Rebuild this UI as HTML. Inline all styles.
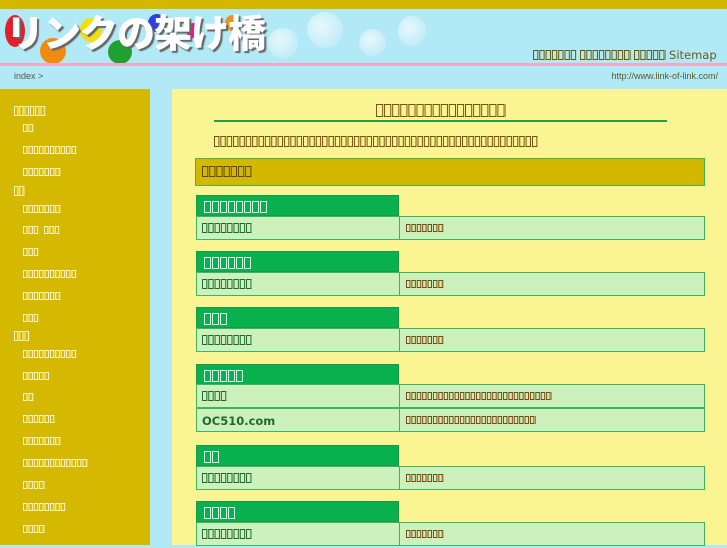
<!DOCTYPE html>
<html><head><meta charset="utf-8"><style>
*{margin:0;padding:0;box-sizing:border-box}
body{width:727px;height:545px;overflow:hidden;position:relative;background:#b2e9f6;font-family:"Liberation Sans",sans-serif}
.a{position:absolute;white-space:nowrap;line-height:1}
.t{display:inline-block;vertical-align:top;color:transparent;overflow:hidden;font-size:6px;line-height:1;white-space:nowrap;height:var(--h);
background:
linear-gradient(to right,var(--c) 1px,transparent 1px,transparent calc(var(--w) - 2px),var(--c) calc(var(--w) - 2px),var(--c) calc(var(--w) - 1px),transparent calc(var(--w) - 1px)) 0 0/var(--w) 100% repeat-x,
linear-gradient(to right,var(--c) calc(var(--w) - 1px),transparent calc(var(--w) - 1px)) 0 0/var(--w) 1px repeat-x,
linear-gradient(to right,var(--c) calc(var(--w) - 1px),transparent calc(var(--w) - 1px)) 0 100%/var(--w) 1px repeat-x}
.sh{--c:#fff6c8;--w:5.3px;--h:10px}
.ss{--c:#fff6c8;--w:5.4px;--h:8px}
.gh{position:absolute;left:196px;width:203px;height:21px;background:#08b04e;border:1px solid #1a9a48;padding:5px 0 0 7px}
.gh .t{--c:#d8ffe8;--w:8px;--h:12px}
.row{position:absolute;left:196px;width:509px;height:24px;background:#cdf1bc;border:1px solid #3db55a}
.row .l{position:absolute;left:5px;top:6px}
.row .l .t{--c:#1f6a2c;--w:6.3px;--h:10px}
.row .r{position:absolute;left:202px;top:0;height:22px;border-left:1px solid #3db55a;padding:7px 0 0 6px;width:306px}
.row .r .t{--c:#7a4a10;--w:5.4px;--h:8px}
.bub{position:absolute;border-radius:50%;background:radial-gradient(circle at 40% 40%,#e8f8fd,#c8eef8 60%,#bfe9f6)}
.ball{position:absolute;border-radius:50%}
</style></head><body>
<div style="position:absolute;left:0;top:0;width:727px;height:9px;background:#d4b800"></div>
<div class="bub" style="left:268px;top:28px;width:30px;height:30px"></div>
<div class="bub" style="left:307px;top:12px;width:36px;height:36px"></div>
<div class="bub" style="left:359px;top:29px;width:27px;height:27px"></div>
<div class="bub" style="left:398px;top:16px;width:28px;height:30px"></div>
<div class="ball" style="left:5px;top:15px;width:20px;height:32px;background:#e0202a"></div>
<div class="ball" style="left:40px;top:38px;width:26px;height:26px;background:#f08a10"></div>
<div class="ball" style="left:80px;top:18px;width:22px;height:24px;background:#f0e010"></div>
<div class="ball" style="left:108px;top:40px;width:24px;height:24px;background:#20a030"></div>
<div class="ball" style="left:148px;top:14px;width:18px;height:18px;background:#3040e0"></div>
<div class="ball" style="left:186px;top:23px;width:15px;height:15px;background:#e02080"></div>
<div class="ball" style="left:225px;top:15px;width:15px;height:16px;background:#f09020"></div>
<div class="a" style="left:6px;top:12px;font-family:'Noto Sans CJK JP',sans-serif;font-weight:900;font-size:38px;color:#fff;letter-spacing:-1px;text-shadow:2px 2px 1px #666">リンクの架け橋</div>
<div class="a" style="left:533px;top:49px;color:#6b5800;font-size:12px"><span class="t" style="--c:#6b5800;--w:6.3px;--h:10px;margin-top:1px">あいうえおかき</span> <span class="t" style="--c:#6b5800;--w:6.3px;--h:10px;margin-top:1px">あいうえおかきく</span> <span class="t" style="--c:#6b5800;--w:6.3px;--h:10px;margin-top:1px">あいうえお</span> <span style="font-family:'DejaVu Sans',sans-serif;font-size:11.5px;color:#6b5a20">Sitemap</span></div>
<div style="position:absolute;left:0;top:63px;width:727px;height:3px;background:#f4a6c4"></div>
<div class="a" style="left:14px;top:72px;font-size:9px;color:#5a5a40">index &gt;</div>
<div class="a" style="right:9px;top:72px;font-size:9px;color:#5a5a20">http://www.link-of-link.com/</div>
<div style="position:absolute;left:0;top:89px;width:150px;height:456px;background:#d4b900">
<div class="a" style="left:14px;top:17px"><span class="t sh">ナビゲーショ</span></div>
<div class="a" style="left:23px;top:35px"><span class="t ss">ホム</span></div>
<div class="a" style="left:23px;top:57px"><span class="t ss">あいうえおかきくけこ</span></div>
<div class="a" style="left:23px;top:79px"><span class="t ss">あいうえおかき</span></div>
<div class="a" style="left:14px;top:97px"><span class="t sh">分類</span></div>
<div class="a" style="left:23px;top:116px"><span class="t ss">あいうえおかき</span></div>
<div class="a" style="left:23px;top:137px"><span class="t ss">あいう</span> <span class="t ss">えおか</span></div>
<div class="a" style="left:23px;top:159px"><span class="t ss">あいう</span></div>
<div class="a" style="left:23px;top:181px"><span class="t ss">あいうえおかきくけこ</span></div>
<div class="a" style="left:23px;top:203px"><span class="t ss">あいうえおかき</span></div>
<div class="a" style="left:23px;top:225px"><span class="t ss">あいう</span></div>
<div class="a" style="left:14px;top:242px"><span class="t sh">その他</span></div>
<div class="a" style="left:23px;top:261px"><span class="t ss">あいうえおかきくけこ</span></div>
<div class="a" style="left:23px;top:283px"><span class="t ss">あいうえお</span></div>
<div class="a" style="left:23px;top:304px"><span class="t ss">あい</span></div>
<div class="a" style="left:23px;top:326px"><span class="t ss">あいうえおか</span></div>
<div class="a" style="left:23px;top:348px"><span class="t ss">あいうえおかき</span></div>
<div class="a" style="left:23px;top:370px"><span class="t ss">あいうえおかきくけこさし</span></div>
<div class="a" style="left:23px;top:392px"><span class="t ss">あいうえ</span></div>
<div class="a" style="left:23px;top:414px"><span class="t ss">あいうえおかきく</span></div>
<div class="a" style="left:23px;top:436px"><span class="t ss">あいうえ</span></div>
</div>
<div style="position:absolute;left:172px;top:89px;width:555px;height:456px;background:#faf592"></div>
<div class="a" style="left:376px;top:104px"><span class="t" style="--c:#7a5010;--w:8.1px;--h:13px">あいうえおかきくけこさしすせそた</span></div>
<div style="position:absolute;left:214px;top:120px;width:453px;height:2px;background:#1fa048"></div>
<div class="a" style="left:214px;top:136px"><span class="t" style="--c:#7a5010;--w:6.36px;--h:11px">あいうえおかきくけこさしすせそたちつてとなにぬねのはひふへほまみむめもやゆよらりるれろわをんあいうえお</span></div>
<div style="position:absolute;left:195px;top:158px;width:510px;height:28px;background:#d4b800;border:1px solid #3db55a"></div>
<div class="a" style="left:202px;top:166px"><span class="t" style="--c:#5a4800;--w:7.2px;--h:11px">あいうえおかき</span></div>

<div class="gh" style="top:195px"><span class="t">あいうえおかきく</span></div>
<div class="row" style="top:216px"><div class="l"><span class="t">あいうえおかきく</span></div><div class="r"><span class="t">あいうえおかき</span></div></div>
<div class="gh" style="top:251px"><span class="t">あいうえおか</span></div>
<div class="row" style="top:272px"><div class="l"><span class="t">あいうえおかきく</span></div><div class="r"><span class="t">あいうえおかき</span></div></div>
<div class="gh" style="top:307px"><span class="t">あいう</span></div>
<div class="row" style="top:328px"><div class="l"><span class="t">あいうえおかきく</span></div><div class="r"><span class="t">あいうえおかき</span></div></div>
<div class="gh" style="top:364px"><span class="t">あいうえお</span></div>
<div class="row" style="top:384px"><div class="l"><span class="t">あいうえ</span></div><div class="r"><span class="t">あいうえおかきくけこさしすせそたちつてとなにぬねのはひ</span></div></div>
<div class="row" style="top:408px"><div class="l" style="font-family:'DejaVu Sans',sans-serif;font-weight:bold;font-size:11.5px;top:5px;color:#1f6a2c">OC510.com</div><div class="r"><span class="t">あいうえおかきくけこさしすせそたちつてとなにぬね</span></div></div>
<div class="gh" style="top:445px"><span class="t">あい</span></div>
<div class="row" style="top:466px"><div class="l"><span class="t">あいうえおかきく</span></div><div class="r"><span class="t">あいうえおかき</span></div></div>
<div class="gh" style="top:501px"><span class="t">あいうえ</span></div>
<div class="row" style="top:522px"><div class="l"><span class="t">あいうえおかきく</span></div><div class="r"><span class="t">あいうえおかき</span></div></div>
<script>
document.querySelectorAll('.t').forEach(function(e){
 var w=parseFloat(getComputedStyle(e).getPropertyValue('--w'));
 e.style.width=(e.textContent.length*w)+'px';
});
</script>
</body></html>
